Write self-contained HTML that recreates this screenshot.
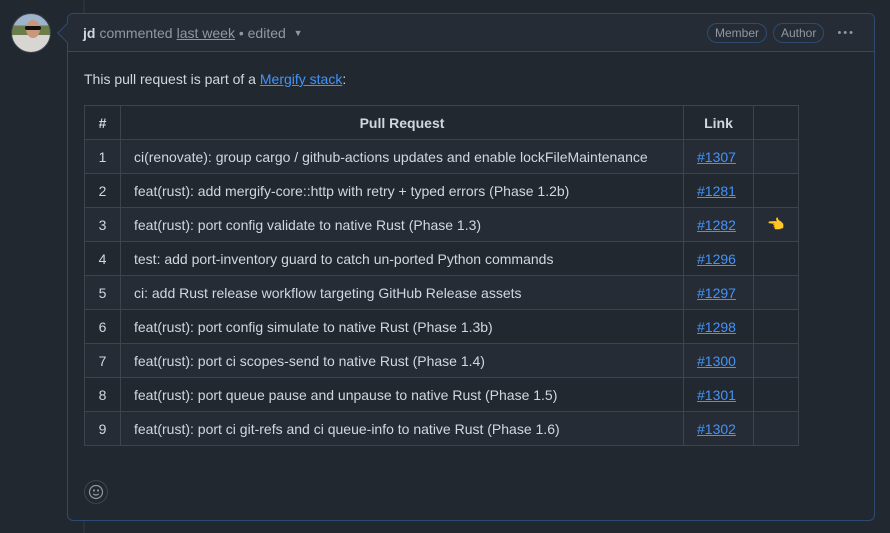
<!DOCTYPE html>
<html><head><meta charset="utf-8"><style>
*{box-sizing:border-box;margin:0;padding:0}
body{width:890px;height:533px;background:#212830;font-family:"Liberation Sans",sans-serif;font-size:14px;color:#d1d7e0;position:relative;overflow:hidden}
.line{position:absolute;left:83px;top:0;width:2px;height:533px;background:#2a313c}
.av{position:absolute;left:11px;top:13px;width:40px;height:40px;border-radius:50%;overflow:hidden;background:linear-gradient(#9db4cc 0 30%,#6a7d4a 30% 55%,#d8d6d2 55%);border:1px solid #3d444d}
.av:before{content:"";position:absolute;left:14px;top:6px;width:14px;height:18px;border-radius:50%;background:#c99779}
.av:after{content:"";position:absolute;left:13px;top:12px;width:16px;height:4px;background:#111;border-radius:2px}
.box{position:absolute;left:67px;top:13px;width:808px;height:508px;border:1px solid #2f4a70;border-radius:6px;background:#212830}
.hd{height:38px;background:#262c36;border-bottom:1px solid #2f4a70;border-radius:6px 6px 0 0;display:flex;align-items:center;padding-left:15px;color:#9198a1;position:relative}
.hd b{color:#d1d7e0;margin-right:4px}
.hd u{text-decoration:underline;text-decoration-color:#9198a1;margin-left:4px}
.arrow{position:absolute;left:-8px;top:12px;width:14px;height:14px;background:#262c36;border-left:1px solid #2f4a70;border-bottom:1px solid #2f4a70;transform:rotate(45deg)}
.pill{position:absolute;top:9px;height:20px;border:1px solid #2f4a70;border-radius:10px;font-size:12px;line-height:18px;padding:0 7px;color:#9198a1}
.dots{position:absolute;right:19px;top:12px;font-size:11px;letter-spacing:2px;color:#9198a1;line-height:14px}
.p{position:absolute;left:16px;top:57px}
a{color:#4493f8;text-decoration:underline}
table{position:absolute;left:17px;top:92px;border-collapse:collapse}
td,th{border:1px solid #3d444d;height:34px;padding:0 13px}
th{font-weight:bold;text-align:center}
tr:nth-child(even){background:#262c36}
td:first-child{text-align:center}
.emo{position:absolute;left:16px;top:466px;width:24px;height:24px;border-radius:50%;border:1px solid #3d444d;display:flex;align-items:center;justify-content:center}
</style></head><body>
<div class="line"></div>
<div class="av"></div>
<div class="box">
<div class="hd"><div class="arrow"></div><b>jd</b> commented <u>last week</u>&nbsp;• edited&nbsp;&nbsp;<span style="font-size:9px">▼</span>
<span class="pill" style="left:639px">Member</span><span class="pill" style="left:705px">Author</span><span class="dots">•••</span></div>
<div class="p">This pull request is part of a <a>Mergify stack</a>:</div>
<table style="left:16px;top:91px">
<tr><th style="width:36px">#</th><th style="width:563px">Pull Request</th><th style="width:70px">Link</th><th style="width:45px"></th></tr>
<tr><td>1</td><td>ci(renovate): group cargo / github-actions updates and enable lockFileMaintenance</td><td><a>#1307</a></td><td></td></tr>
<tr><td>2</td><td>feat(rust): add mergify-core::http with retry + typed errors (Phase 1.2b)</td><td><a>#1281</a></td><td></td></tr>
<tr><td>3</td><td>feat(rust): port config validate to native Rust (Phase 1.3)</td><td><a>#1282</a></td><td style="text-align:center;color:#f0b400">👈</td></tr>
<tr><td>4</td><td>test: add port-inventory guard to catch un-ported Python commands</td><td><a>#1296</a></td><td></td></tr>
<tr><td>5</td><td>ci: add Rust release workflow targeting GitHub Release assets</td><td><a>#1297</a></td><td></td></tr>
<tr><td>6</td><td>feat(rust): port config simulate to native Rust (Phase 1.3b)</td><td><a>#1298</a></td><td></td></tr>
<tr><td>7</td><td>feat(rust): port ci scopes-send to native Rust (Phase 1.4)</td><td><a>#1300</a></td><td></td></tr>
<tr><td>8</td><td>feat(rust): port queue pause and unpause to native Rust (Phase 1.5)</td><td><a>#1301</a></td><td></td></tr>
<tr><td>9</td><td>feat(rust): port ci git-refs and ci queue-info to native Rust (Phase 1.6)</td><td><a>#1302</a></td><td></td></tr>
</table>
<div class="emo"><svg width="16" height="16" viewBox="0 0 16 16" fill="none" stroke="#9198a1" stroke-width="1.2"><circle cx="8" cy="8" r="6.5"/><path d="M5.3 9.7c.7.9 1.6 1.3 2.7 1.3s2-.4 2.7-1.3"/><circle cx="6" cy="6.5" r=".5" fill="#9198a1"/><circle cx="10" cy="6.5" r=".5" fill="#9198a1"/></svg></div>
</div>
</body></html>
